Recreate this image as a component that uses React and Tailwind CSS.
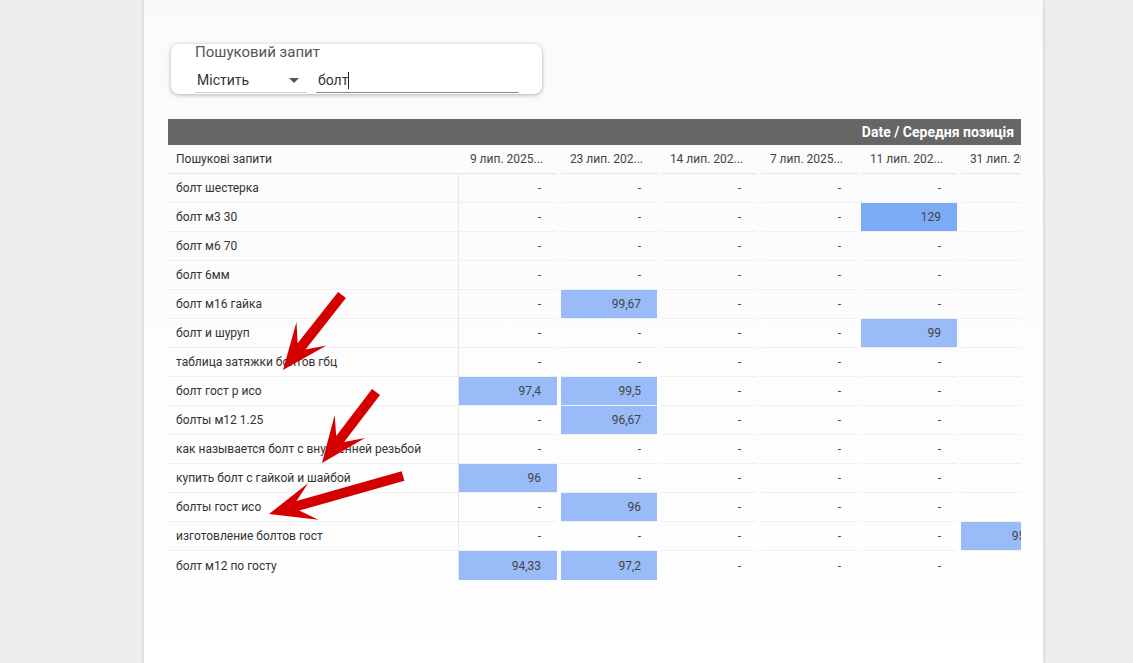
import React from 'react'

const dates = ['9 лип. 2025...', '23 лип. 202...', '14 лип. 202...', '7 лип. 2025...', '11 лип. 202...', '31 лип. 202...']

const rows = [
  ['болт шестерка', {}],
  ['болт м3 30', { 4: ['129', 'dark'] }],
  ['болт м6 70', {}],
  ['болт 6мм', {}],
  ['болт м16 гайка', { 1: ['99,67'] }],
  ['болт и шуруп', { 4: ['99'] }],
  ['таблица затяжки болтов гбц', {}],
  ['болт гост р исо', { 0: ['97,4'], 1: ['99,5'] }],
  ['болты м12 1.25', { 1: ['96,67'] }],
  ['как называется болт с внутренней резьбой', {}],
  ['купить болт с гайкой и шайбой', { 0: ['96'] }],
  ['болты гост исо', { 1: ['96'] }],
  ['изготовление болтов гост', { 5: ['95,67'] }],
  ['болт м12 по госту', { 0: ['94,33'], 1: ['97,2'] }],
]

// arrow polygon from tail to tip, barbs swept back
function arrowPoints([tx, ty], [px, py], shaft = 10, headLen = 46, headW = 38, neck = 30) {
  const dx = px - tx, dy = py - ty
  const len = Math.hypot(dx, dy)
  const ux = dx / len, uy = dy / len
  const nx = -uy, ny = ux
  const at = (d, o) => [px - ux * d + nx * o, py - uy * d + ny * o]
  const pts = [
    [tx + nx * shaft / 2, ty + ny * shaft / 2],
    at(neck, shaft / 2),
    at(headLen, headW / 2),
    [px, py],
    at(headLen, -headW / 2),
    at(neck, -shaft / 2),
    [tx - nx * shaft / 2, ty - ny * shaft / 2],
  ]
  return pts.map(p => p.map(v => v.toFixed(1)).join(',')).join(' ')
}

function Cell({ i, v, last }) {
  const val = v ? v[0] : '-'
  const bg = v ? (v[1] === 'dark' ? 'bg-[#7baaf7]' : 'bg-[#99bbf8]') : ''
  const line = last ? '' : 'border-b border-[#f0f0f0]'
  if (i === 0) {
    return (
      <div className="w-[100px] shrink-0 flex border-l border-[#e6e6e6]">
        <div className={`w-[98px] h-[29px] ${line} flex items-center justify-end pr-[16px] text-[12px] text-[#444] ${bg}`}>{val}</div>
      </div>
    )
  }
  return (
    <div className="w-[100px] shrink-0 flex pl-[3px]">
      <div className={`w-[96px] h-[29px] ${line} flex items-center justify-end pr-[16px] text-[12px] text-[#444] whitespace-nowrap ${bg}`}>{val}</div>
    </div>
  )
}

export default function App() {
  return (
    <div className="relative w-full h-[663px] bg-[#eeeeee] pl-[144px] overflow-hidden" style={{ fontFamily: 'Roboto, "Liberation Sans", sans-serif' }}>
      <div className="w-[899px] h-full bg-gradient-to-b from-[#fafafa] to-white shadow-[0_0_4px_rgba(0,0,0,0.18)] pt-[44px] pl-[24px]">
        {/* filter */}
        <div className="ml-[3px] w-[371px] h-[50px] rounded-lg bg-white shadow-[0_1px_4px_rgba(0,0,0,0.3)] relative">
          <div className="absolute left-[24px] top-[-1px] text-[15px] text-[#555] leading-[18px]">Пошуковий запит</div>
          <div className="absolute left-[24px] top-[24px] w-[112px] h-[25px] border-b border-[#d0d0d0] flex items-center">
            <span className="ml-[2px] text-[14px] text-[#333]">Містить</span>
            <svg className="absolute left-[94px] top-[10px]" width="10" height="6" viewBox="0 0 10 6"><path d="M0 0h10L5 5z" fill="#555" /></svg>
          </div>
          <div className="absolute left-[145px] top-[24px] w-[202px] h-[25px] border-b border-[#888] flex items-center">
            <span className="ml-[2px] text-[14px] text-[#333]">болт</span>
            <span className="w-px h-[17px] bg-[#222]" />
          </div>
        </div>

        {/* table */}
        <div className="mt-[25px] w-[853px] overflow-hidden">
          <div className="h-[26px] bg-[#666666] flex items-center justify-end pr-[7px] text-[14px] font-bold text-white">Date / Середня позиція</div>
          <div className="flex h-[29px]">
            <div className="w-[290px] shrink-0 border-b border-[#e6e6e6] flex items-center pl-[8px] text-[12px] text-[#333]">Пошукові запити</div>
            {dates.map((d, i) => (
              <div key={d} className={`w-[100px] shrink-0 flex ${i === 0 ? '' : 'pl-[3px]'}`}>
                <div className={`${i === 0 ? 'w-[99px]' : 'w-[96px]'} border-b border-[#e6e6e6] flex items-center justify-end pr-[14px] text-[12px] text-[#444] whitespace-nowrap`}>{d}</div>
              </div>
            ))}
          </div>
          {rows.map(([q, vals], r) => {
            const last = r === rows.length - 1
            return (
              <div key={q} className="flex">
                <div className={`w-[290px] shrink-0 h-[29px] ${last ? '' : 'border-b border-[#f0f0f0]'} flex items-center pl-[8px] text-[12px] text-[#333] whitespace-nowrap`}>{q}</div>
                {dates.map((d, i) => <Cell key={d} i={i} v={vals[i]} last={last} />)}
              </div>
            )
          })}
        </div>
      </div>

      {/* annotation arrows */}
      <svg className="absolute left-0 top-0 pointer-events-none" width="1133" height="663">
        <polygon points={arrowPoints([342, 295], [283, 370])} fill="#d40000" />
        <polygon points={arrowPoints([376, 392], [322, 463])} fill="#d40000" />
        <polygon points={arrowPoints([403, 476], [269, 514])} fill="#d40000" />
      </svg>
    </div>
  )
}
